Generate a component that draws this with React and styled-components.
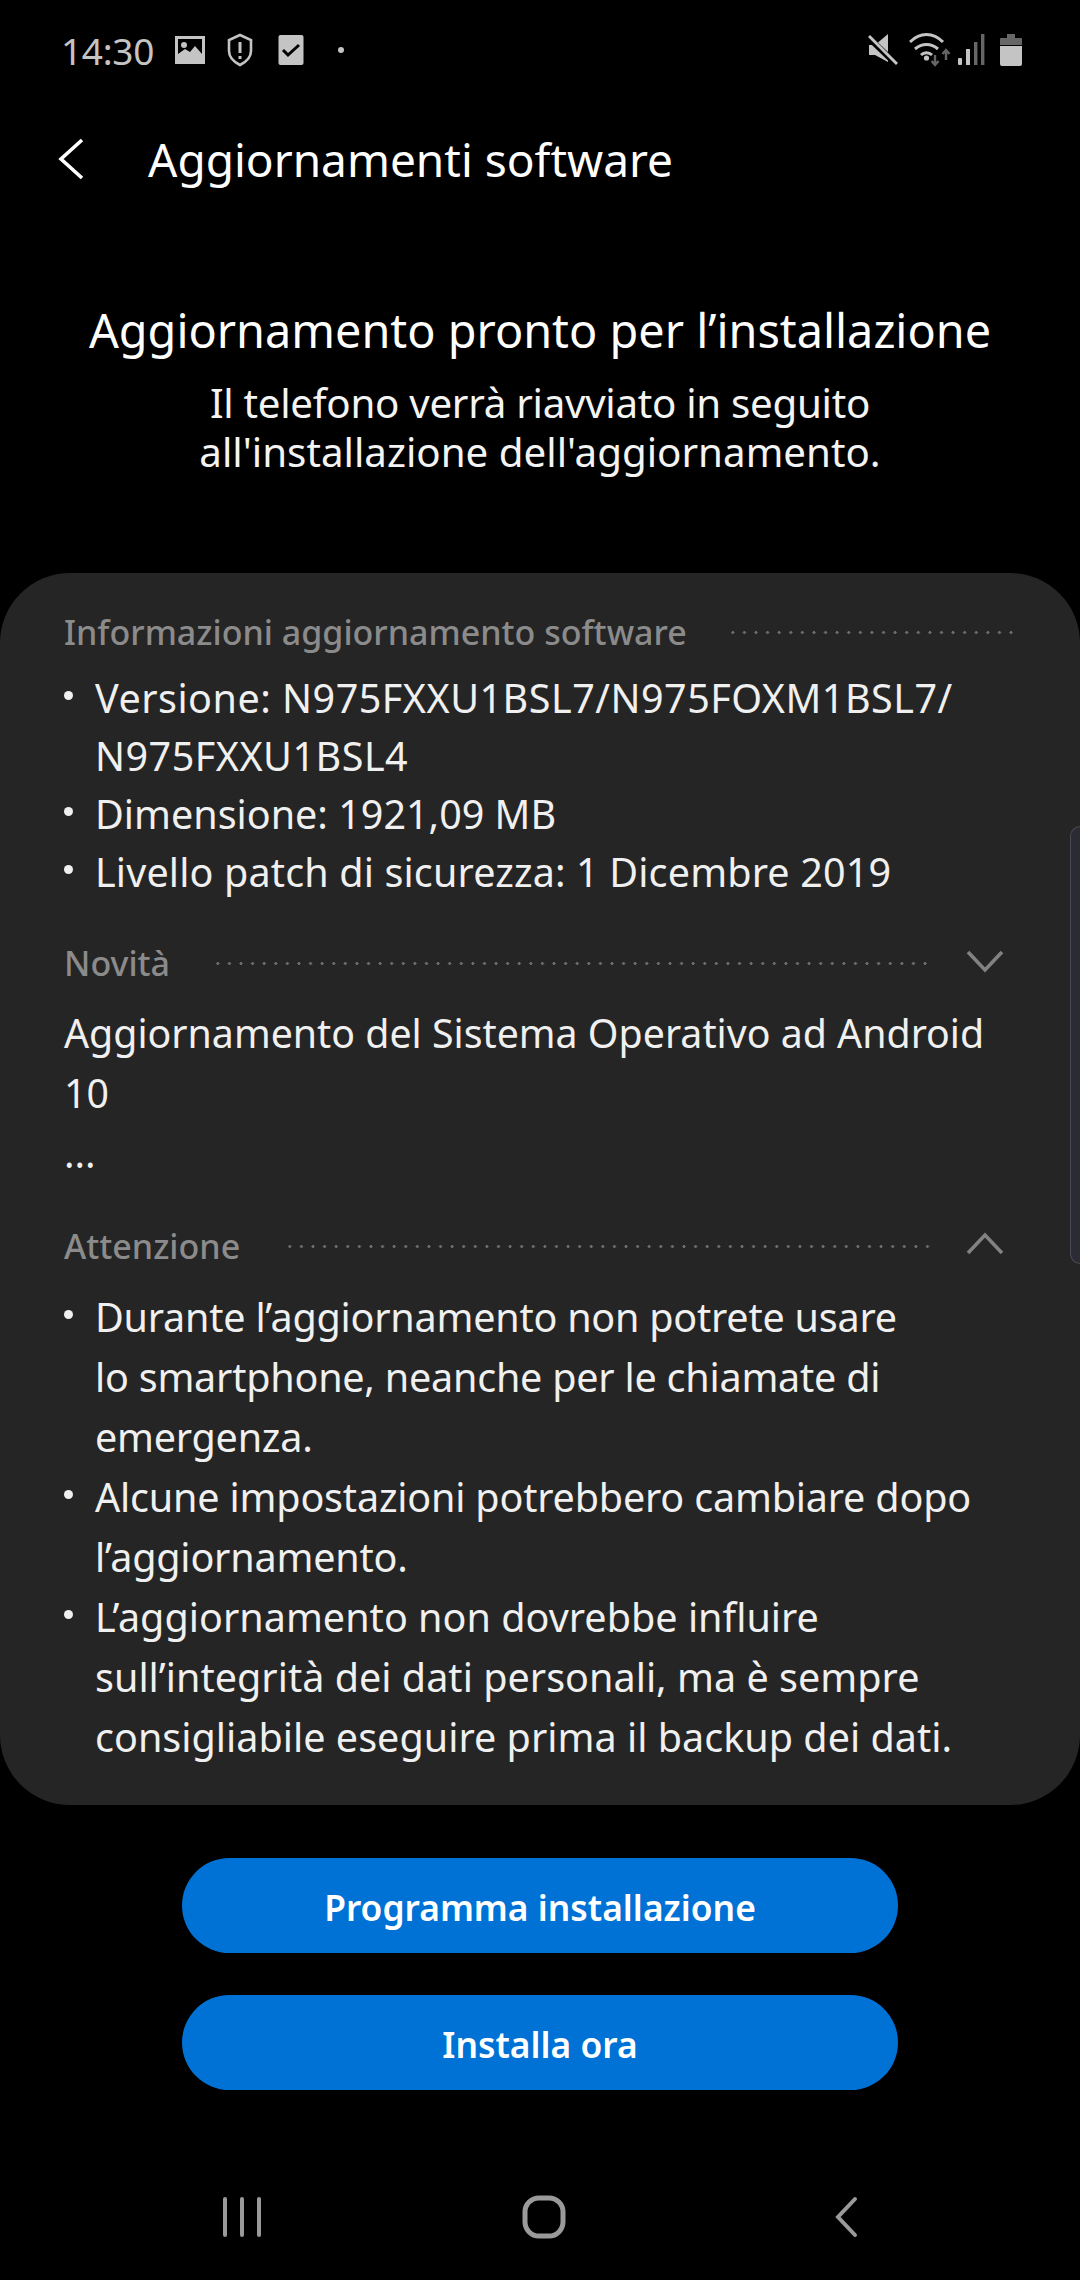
import React from 'react';
import styled, { createGlobalStyle } from 'styled-components';

const GlobalStyle = createGlobalStyle`
    html, body {
        margin: 0;
        padding: 0;
        background: #000;
    }
    * {
        box-sizing: border-box;
    }
`

const Page = styled.div`
    position: relative;
    width: 1080px;
    height: 2280px;
    background: #000;
    font-family: "Noto Sans", "Open Sans", sans-serif;
    color: #f2f2f2;
    overflow: hidden;
    display: flex;
    flex-direction: column;
`

const StatusBar = styled.div`
    height: 100px;
    padding: 0 58px 0 61px;
    display: flex;
    align-items: center;
    justify-content: space-between;
    color: #c4c4c4;
`

const StatusGroup = styled.div`
    display: flex;
    align-items: center;
`

const Clock = styled.span`
    font-size: 37px;
    width: 113px;
    letter-spacing: -0.3px;
`

const Toolbar = styled.div`
    height: 120px;
    padding-bottom: 2px;
    padding-left: 58px;
    display: flex;
    align-items: center;
    gap: 64px;
`

const ToolbarTitle = styled.h1`
    margin: 0;
    font-size: 46px;
    font-weight: 400;
    color: #fff;
`

const Intro = styled.div`
    height: 353px;
    padding-top: 80px;
    text-align: center;
`

const IntroTitle = styled.h2`
    margin: 0 0 18px;
    font-size: 46.8px;
    line-height: 60px;
    font-weight: 400;
    color: #fff;
`

const IntroText = styled.p`
    margin: 0;
    font-size: 40.3px;
    line-height: 49px;
    color: #f4f4f4;
`

const IntroLead = styled.span`
    letter-spacing: -0.3px;
`

const Card = styled.section`
    height: 1232px;
    padding: 30px 64px 0;
    background: #252525;
    border-radius: 70px;
    display: flex;
    flex-direction: column;
`

const SectionHead = styled.div`
    height: 58px;
    display: flex;
    align-items: center;
    margin-top: ${(p) => p.$top || 0}px;
`

const SectionLabel = styled.span`
    font-size: 34px;
    font-weight: 500;
    color: #8b8b8b;
`

const Dots = styled.span`
    flex: 1;
    height: 3px;
    margin-left: ${(p) => p.$gap}px;
    margin-right: ${(p) => p.$end}px;
    background-image: radial-gradient(circle, #6c6c6c 1.4px, transparent 1.6px);
    background-size: 11.6px 3px;
    background-repeat: repeat-x;
`

const Chevron = styled.svg`
    width: 40px;
    height: 24px;
    flex: none;
    margin: -4px 11px 0 0;
`

const BulletList = styled.ul`
    margin: ${(p) => p.$top}px 0 0;
    padding: 0;
    list-style: none;
`

const Bullet = styled.li`
    position: relative;
    padding-left: 31px;
    font-size: 39.5px;
    line-height: ${(p) => p.$line || 60}px;
    letter-spacing: ${(p) => p.$track || 0}px;
    color: #f0f0f0;
    white-space: pre-line;

    &::before {
        content: "";
        position: absolute;
        left: 0;
        top: ${(p) => ((p.$line || 60) - 9) / 2 - 3}px;
        width: 9px;
        height: 9px;
        border-radius: 50%;
        background: #f0f0f0;
    }
`

const Paragraph = styled.p`
    margin: 11px 0 0;
    font-size: 39.3px;
    line-height: 60px;
    color: #f0f0f0;
    white-space: pre-line;
`

const Actions = styled.div`
    padding-top: 53px;
    display: flex;
    flex-direction: column;
    align-items: center;
    gap: 42px;
`

const ActionButton = styled.button`
    width: 716px;
    height: 95px;
    padding: 3px 0 0;
    border: none;
    border-radius: 48px;
    background: #0072d6;
    color: #fff;
    font-family: inherit;
    font-size: 35.4px;
    font-weight: 600;
`

const NavBar = styled.div`
    height: 190px;
    padding: 64px 221px 0 222px;
    display: flex;
    align-items: center;
    justify-content: space-between;
`

const EdgeHandle = styled.div`
    position: absolute;
    right: 0;
    top: 826px;
    width: 10px;
    height: 438px;
    background: #2b2b35;
    border: 1.5px solid #4a4a52;
    border-right: none;
    border-radius: 10px 0 0 10px;
`

const infoRows = [
    { text: 'Versione: N975FXXU1BSL7/N975FOXM1BSL7/\nN975FXXU1BSL4', track: 0.5 },
    { text: 'Dimensione: 1921,09 MB' },
    { text: 'Livello patch di sicurezza: 1 Dicembre 2019', track: 0.15 },
]

const warningRows = [
    { text: 'Durante l’aggiornamento non potrete usare\nlo smartphone, neanche per le chiamate di\nemergenza.', track: -0.22 },
    { text: 'Alcune impostazioni potrebbero cambiare dopo\nl’aggiornamento.', track: -0.18 },
    { text: 'L’aggiornamento non dovrebbe influire\nsull’integrità dei dati personali, ma è sempre\nconsigliabile eseguire prima il backup dei dati.', track: 0.03 },
]

const App = () => {
    return (
        <Page>
            <GlobalStyle />
            <StatusBar>
                <StatusGroup>
                    <Clock>14:30</Clock>
                    <svg width="32" height="30" viewBox="0 0 32 30" style={{ marginRight: 20 }}>
                        <path fillRule="evenodd" fill="#c4c4c4" d="M1 1h30v28H1zM4 4v15l7-5 5 3 5-6 7 8V4z" />
                        <circle cx="10" cy="10" r="3" fill="#c4c4c4" />
                    </svg>
                    <svg width="28" height="34" viewBox="0 0 28 34" style={{ marginRight: 24 }}>
                        <path d="M14 2l11 5v11c0 6-5 11-11 14C8 29 3 24 3 18V7z" fill="none" stroke="#c4c4c4" strokeWidth="2.6" />
                        <path d="M14 9v11M14 23v3" fill="none" stroke="#c4c4c4" strokeWidth="3" />
                    </svg>
                    <svg width="26" height="32" viewBox="0 0 26 32" style={{ marginRight: 34 }}>
                        <rect x="0.5" y="1" width="25" height="30" rx="2" fill="#c4c4c4" />
                        <path d="M5 16l5 5 11-10" fill="none" stroke="#000" strokeWidth="3" />
                    </svg>
                    <svg width="6" height="6" viewBox="0 0 6 6">
                        <circle cx="3" cy="3" r="3" fill="#c4c4c4" />
                    </svg>
                </StatusGroup>
                <StatusGroup>
                    <svg width="30" height="34" viewBox="0 0 30 34" style={{ marginRight: 11 }}>
                        <path d="M1 12h6L20 1v28L7 22H1z" fill="#c4c4c4" />
                        <path d="M0 4l29 28" stroke="#000" strokeWidth="6" />
                        <path d="M1 3l28 28" stroke="#c4c4c4" strokeWidth="3" />
                    </svg>
                    <svg width="44" height="36" viewBox="0 0 44 36" style={{ marginRight: 5 }}>
                        <path d="M1 10c10-10 23-10 33 0M6 17c7-6 16-6 23 0M12 23c3-3 8-3 11 0" fill="none" stroke="#c4c4c4" strokeWidth="3" />
                        <circle cx="17.5" cy="26" r="2.6" fill="#c4c4c4" />
                        <path d="M26 23v10M22.5 29l3.5 4 3.500-4" fill="none" stroke="#666" strokeWidth="2.4" />
                        <path d="M37 28V18M33.500 22l3.500-4 3.500 4" fill="none" stroke="#666" strokeWidth="2.4" />
                    </svg>
                    <svg width="28" height="34" viewBox="0 0 28 34" style={{ marginRight: 14 }}>
                        <rect x="0" y="25" width="4" height="7" rx="1" fill="#c4c4c4" />
                        <rect x="8" y="16" width="4" height="16" fill="#c4c4c4" />
                        <rect x="16" y="9" width="3.4" height="23" fill="#666" />
                        <rect x="23" y="1" width="3.4" height="31" fill="#666" />
                    </svg>
                    <svg width="22" height="32" viewBox="0 0 22 32">
                        <path d="M7 0h8v4h6a1 1 0 0 1 1 1v6H0V5a1 1 0 0 1 1-1h6z" fill="#666" />
                        <path d="M0 12h22v18a2 2 0 0 1-2 2H2a2 2 0 0 1-2-2z" fill="#c4c4c4" />
                    </svg>
                </StatusGroup>
            </StatusBar>

            <Toolbar>
                <svg width="26" height="42" viewBox="0 0 26 42">
                    <path d="M24 2L3 21l21 19" fill="none" stroke="#fff" strokeWidth="3.6" />
                </svg>
                <ToolbarTitle>Aggiornamenti software</ToolbarTitle>
            </Toolbar>

            <Intro>
                <IntroTitle>Aggiornamento pronto per l’installazione</IntroTitle>
                <IntroText>
                    <IntroLead>Il telefono verrà riavviato in seguito</IntroLead>
                    <br />
                    all'installazione dell'aggiornamento.
                </IntroText>
            </Intro>

            <Card>
                <SectionHead>
                    <SectionLabel>Informazioni aggiornamento software</SectionLabel>
                    <Dots $gap={40} $end={-3} />
                </SectionHead>
                <BulletList $top={8}>
                    {infoRows.map((row) => (
                        <Bullet key={row.text} $line={58} $track={row.track}>{row.text}</Bullet>
                    ))}
                </BulletList>

                <SectionHead $top={33}>
                    <SectionLabel>Novità</SectionLabel>
                    <Dots $gap={42} $end={35} />
                    <Chevron viewBox="0 0 40 24">
                        <path d="M3 3l17 18L37 3" fill="none" stroke="#828282" strokeWidth="3.6" />
                    </Chevron>
                </SectionHead>
                <Paragraph>{'Aggiornamento del Sistema Operativo ad Android\n10\n...'}</Paragraph>

                <SectionHead $top={34}>
                    <SectionLabel>Attenzione</SectionLabel>
                    <Dots $gap={44} $end={35} />
                    <Chevron viewBox="0 0 40 24">
                        <path d="M3 21L20 3l17 18" fill="none" stroke="#828282" strokeWidth="3.6" />
                    </Chevron>
                </SectionHead>
                <BulletList $top={12}>
                    {warningRows.map((row) => (
                        <Bullet key={row.text} $track={row.track}>{row.text}</Bullet>
                    ))}
                </BulletList>
            </Card>

            <Actions>
                <ActionButton>Programma installazione</ActionButton>
                <ActionButton>Installa ora</ActionButton>
            </Actions>

            <NavBar>
                <svg width="40" height="40" viewBox="0 0 40 40">
                    <path d="M3 2v36M20 2v36M37 2v36" stroke="#9a9a9a" strokeWidth="4" strokeLinecap="round" />
                </svg>
                <svg width="44" height="44" viewBox="0 0 44 44" style={{ marginRight: 8 }}>
                    <rect x="3" y="3" width="38" height="38" rx="14" fill="none" stroke="#9a9a9a" strokeWidth="5" />
                </svg>
                <svg width="26" height="42" viewBox="0 0 26 42">
                    <path d="M22 3L5 21l17 18" fill="none" stroke="#9a9a9a" strokeWidth="4" strokeLinecap="round" />
                </svg>
            </NavBar>

            <EdgeHandle />
        </Page>
    )
}

export default App
